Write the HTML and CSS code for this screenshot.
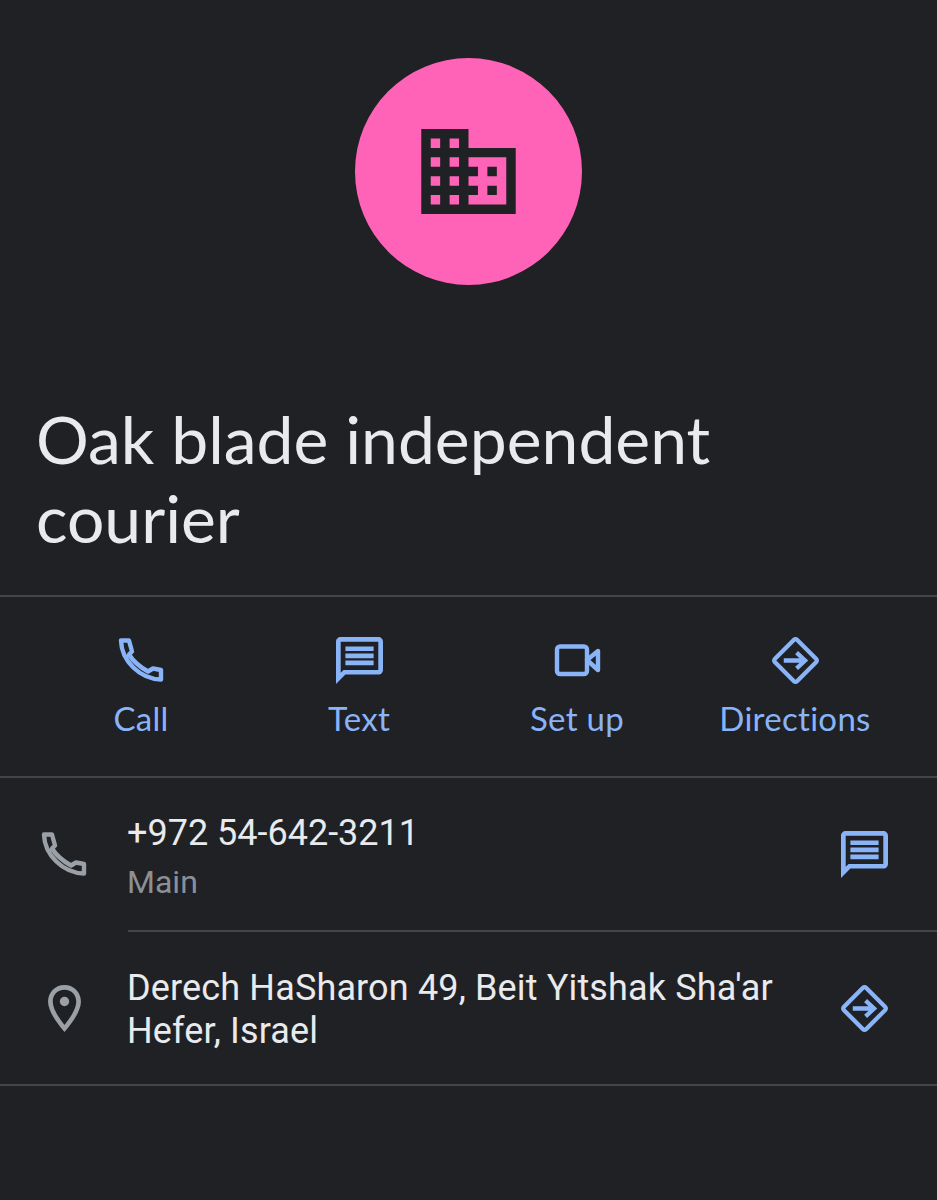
FILE: index.html
```html
<!DOCTYPE html>
<html lang="en">
<head>
  <meta charset="UTF-8" />
  <meta name="viewport" content="width=device-width, initial-scale=1" />
  <title>Oak blade independent courier</title>
  <link rel="stylesheet" href="styles.css">
</head>
<body>

  <div class="avatar-wrap">
    <div class="avatar">
      <svg class="avatar-icon" viewBox="2 3 20 18">
        <path d="M12 7V3H2v18h20V7H12zM6 19H4v-2h2v2zm0-4H4v-2h2v2zm0-4H4V9h2v2zm0-4H4V5h2v2zm4 12H8v-2h2v2zm0-4H8v-2h2v2zm0-4H8V9h2v2zm0-4H8V5h2v2zm10 12h-8v-2h2v-2h-2v-2h2v-2h-2V9h8v10zm-2-8h-2v2h2v-2zm0 4h-2v2h2v-2z"/>
      </svg>
    </div>
  </div>

  <h1 class="name">Oak blade independent courier</h1>

  <div class="actions">
    <div class="action">
      <svg class="icon line" viewBox="0 0 47 47">
        <path d="M3 3.500H11L14 14.500L11 17.500C15 24 22 30 30 34.500L35 31.500L43 33V42.500C22 42 3.500 24 3 3.500Z"/>
      </svg>
      <span>Call</span>
    </div>
    <div class="action">
      <svg class="icon" viewBox="2 2 20 20">
        <path d="M20 2H4c-1.100 0-2 .9-2 2v18l4-4h14c1.100 0 2-.9 2-2V4c0-1.100-.9-2-2-2zm0 14H5.200L4 17.200V4h16v12z"/>
        <path d="M6 12h12v2H6zm0-3h12v2H6zm0-3h12v2H6z"/>
      </svg>
      <span>Text</span>
    </div>
    <div class="action">
      <svg class="icon line" viewBox="0 0 47 47">
        <rect x="3" y="9.500" width="30" height="27.500" rx="3"/>
        <path d="M33 23L44 14V33Z"/>
      </svg>
      <span>Set up</span>
    </div>
    <div class="action">
      <svg class="icon" viewBox="1 1 22 22">
        <path d="M22.430 10.590l-9.010-9.010c-.75-.75-2.070-.76-2.830 0l-9 9c-.78.78-.78 2.040 0 2.820l9 9c.39.39.9.58 1.410.58.51 0 1.020-.19 1.410-.58l8.990-8.990c.79-.76.8-2.020.03-2.820zm-10.420 10.400l-9-9 9-9 9 9-9 9z"/>
        <path class="arrow" d="M6.500 12H16M12.500 8.300L16.500 12L12.500 15.700"/>
      </svg>
      <span>Directions</span>
    </div>
  </div>

  <div class="details">
    <div class="row row-phone">
      <svg class="icon line row-icon" viewBox="0 0 47 47">
        <path d="M3 3.500H11L14 14.500L11 17.500C15 24 22 30 30 34.500L35 31.500L43 33V42.500C22 42 3.500 24 3 3.500Z"/>
      </svg>
      <div class="row-body">
        <p class="row-text">+972 54-642-3211</p>
        <p class="row-sub">Main</p>
      </div>
      <svg class="icon row-action" viewBox="2 2 20 20">
        <path d="M20 2H4c-1.100 0-2 .9-2 2v18l4-4h14c1.100 0 2-.9 2-2V4c0-1.100-.9-2-2-2zm0 14H5.200L4 17.200V4h16v12z"/>
        <path d="M6 12h12v2H6zm0-3h12v2H6zm0-3h12v2H6z"/>
      </svg>
    </div>
    <div class="row-divider"></div>
    <div class="row row-address">
      <svg class="icon row-icon pin" viewBox="5 2 14 20">
        <path d="M12 4c3.100 0 5 2.400 5 5 0 2.500-1.700 5.900-5 10-3.300-4.100-5-7.500-5-10 0-2.600 1.900-5 5-5m0-2C7.800 2 5 5.300 5 9c0 3.300 2.300 7.500 7 13 4.700-5.500 7-9.700 7-13 0-3.700-2.800-7-7-7z"/>
        <circle cx="12" cy="9" r="2"/>
      </svg>
      <div class="row-body">
        <p class="row-text">Derech HaSharon 49, Beit Yitshak Sha'ar Hefer, Israel</p>
      </div>
      <svg class="icon row-action" viewBox="1 1 22 22">
        <path d="M22.430 10.590l-9.010-9.010c-.75-.75-2.070-.76-2.830 0l-9 9c-.78.78-.78 2.040 0 2.820l9 9c.39.39.9.58 1.410.58.51 0 1.020-.19 1.410-.58l8.990-8.990c.79-.76.8-2.020.03-2.820zm-10.420 10.400l-9-9 9-9 9 9-9 9z"/>
        <path class="arrow" d="M6.500 12H16M12.500 8.300L16.500 12L12.500 15.700"/>
      </svg>
    </div>
  </div>

</body>
</html>
```

FILE: styles.css
```css
body {
  background: #202124;
  color: #e8eaed;
  font-family: Roboto, "Liberation Sans", sans-serif;
  margin: 0;
  padding: 0;
}
p {
  margin: 0;
}
.avatar-wrap {
  display: flex;
  justify-content: center;
  padding-top: 58px;
}
.avatar {
  width: 227px;
  height: 227px;
  border-radius: 50%;
  background: #ff63b8;
  display: flex;
  align-items: center;
  justify-content: center;
}
.avatar-icon {
  width: 95px;
  height: 85px;
  fill: #202124;
}
.name {
  margin: 114px 0 0 0;
  padding: 0 200px 38px 36px;
  font-family: Lato, Roboto, sans-serif;
  font-size: 66px;
  font-weight: 400;
  line-height: 79px;
}
.actions {
  display: grid;
  grid-template-columns: repeat(4, 218px);
  padding: 0 32px;
  border-top: 2px solid #434548;
  border-bottom: 2px solid #434548;
  box-sizing: border-box;
  height: 183px;
}
.action {
  display: flex;
  flex-direction: column;
  align-items: center;
  padding-top: 40px;
  color: #8ab4f8;
  font-family: Lato, Roboto, sans-serif;
  font-size: 33px;
  letter-spacing: 0.3px;
}
.action span {
  margin-top: 14px;
}
.icon {
  width: 47px;
  height: 47px;
  fill: #8ab4f8;
  color: #8ab4f8;
  flex-shrink: 0;
}
.line {
  fill: none;
  stroke: currentColor;
  stroke-width: 4.4;
  stroke-linejoin: round;
}
.arrow {
  fill: none;
  stroke: currentColor;
  stroke-width: 2;
}
.row {
  display: flex;
  align-items: center;
}
.row-phone {
  height: 152px;
}
.row-phone .row-body {
  padding-top: 5px;
}
.row-phone .row-text {
  letter-spacing: 0;
}
.row-address {
  height: 152px;
  border-bottom: 2px solid #434548;
}
.row-address .row-body {
  padding-top: 3px;
}
.row-divider {
  height: 2px;
  margin-left: 128px;
  background: #434548;
}
.row-icon {
  color: #9aa0a6;
  fill: #9aa0a6;
  margin: 0 39px 0 41px;
}
.row-icon.line {
  fill: none;
}
.pin {
  width: 33px;
  margin: 0 46px 0 48px;
}
.row-body {
  flex: 1;
}
.row-text {
  font-size: 36px;
  line-height: 43px;
  letter-spacing: 0.15px;
}
.row-sub {
  margin-top: 8px;
  font-size: 32px;
  color: #8b9095;
}
.row-action {
  margin: 0 49px 0 30px;
}
```
